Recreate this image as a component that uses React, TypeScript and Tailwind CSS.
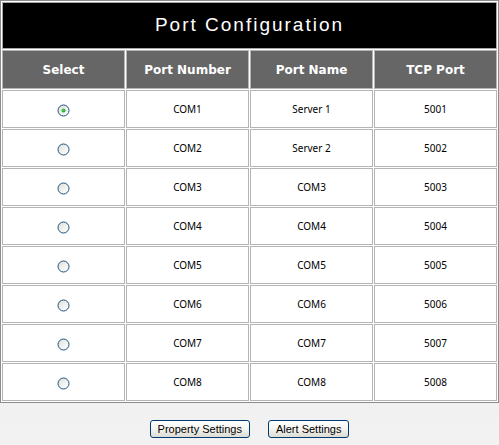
import React from 'react'

const PORTS = [
  { num: 'COM1', name: 'Server 1', tcp: '5001' },
  { num: 'COM2', name: 'Server 2', tcp: '5002' },
  { num: 'COM3', name: 'COM3', tcp: '5003' },
  { num: 'COM4', name: 'COM4', tcp: '5004' },
  { num: 'COM5', name: 'COM5', tcp: '5005' },
  { num: 'COM6', name: 'COM6', tcp: '5006' },
  { num: 'COM7', name: 'COM7', tcp: '5007' },
  { num: 'COM8', name: 'COM8', tcp: '5008' },
]

function Radio({ checked, onClick }: { checked: boolean; onClick: () => void }) {
  return (
    <button type="button" onClick={onClick} className="flex">
      <svg width="13" height="13" viewBox="0 0 13 13">
        <defs>
          <linearGradient id="rfill" x1="0" y1="0" x2="1" y2="1">
            <stop offset="0" stopColor="#dcdcd6" />
            <stop offset="0.6" stopColor="#f4f4f2" />
            <stop offset="1" stopColor="#ffffff" />
          </linearGradient>
          <radialGradient id="rdot" cx="0.4" cy="0.4" r="0.7">
            <stop offset="0" stopColor="#55d255" />
            <stop offset="1" stopColor="#1a9a1a" />
          </radialGradient>
        </defs>
        <circle cx="6.5" cy="6.5" r="5.5" fill="url(#rfill)" stroke="#1c5180" strokeWidth="1" />
        {checked && <circle cx="6.5" cy="6.5" r="2" fill="url(#rdot)" />}
      </svg>
    </button>
  )
}

function XpButton({ children }: { children: React.ReactNode }) {
  return (
    <button
      type="button"
      className="h-[18px] px-[7px] rounded-[3px] border border-[#003c74] bg-gradient-to-b from-white via-[#f4f4f0] to-[#dcdcd4] text-[11px] leading-none text-black font-['Liberation_Sans',Arial,sans-serif]"
    >
      {children}
    </button>
  )
}

const cell = "h-[38px] border border-[#b4b4b4] text-center text-[10px] text-black font-['Noto_Sans',Tahoma,sans-serif]"

export default function App() {
  const [selected, setSelected] = React.useState(0)

  return (
    <div className="w-[499px] h-[445px] flex flex-col bg-gradient-to-b from-[#e6e6e6] to-[#f2f2f2]">
      <table className="w-[499px] table-fixed border-separate border-spacing-[1px] border border-[#8c8c8c] bg-white">
        <tbody>
          <tr>
            <td
              colSpan={4}
              className="h-[47px] border border-[#a8a8a8] bg-black text-center text-white text-[19px] tracking-[2px] font-['Liberation_Sans',Arial,sans-serif]"
            >
              Port Configuration
            </td>
          </tr>
          <tr>
            {['Select', 'Port Number', 'Port Name', 'TCP Port'].map((h) => (
              <th
                key={h}
                className="h-[39px] border border-[#b4b4b4] bg-[#666666] text-center text-white text-[12px] font-bold font-['DejaVu_Sans',Verdana,sans-serif]"
              >
                {h}
              </th>
            ))}
          </tr>
          {PORTS.map((p, i) => (
            <tr key={p.num}>
              <td className="h-[38px] border border-[#b4b4b4]">
                <div className="flex justify-center items-center pt-[2px]">
                  <Radio checked={selected === i} onClick={() => setSelected(i)} />
                </div>
              </td>
              <td className={cell}>{p.num}</td>
              <td className={cell}>{p.name}</td>
              <td className={cell}>{p.tcp}</td>
            </tr>
          ))}
        </tbody>
      </table>
      <div className="flex justify-center gap-[18px] pt-[17px]">
        <XpButton>Property Settings</XpButton>
        <XpButton>Alert Settings</XpButton>
      </div>
    </div>
  )
}
